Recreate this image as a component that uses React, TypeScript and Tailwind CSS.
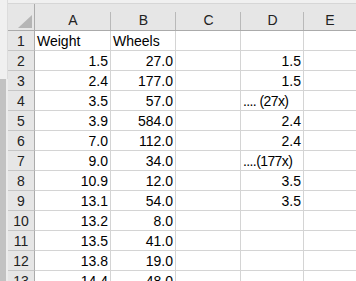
import React from "react";

const rows: { n: number; a: string; b: string; d: string; dLeft?: boolean }[] = [
  { n: 1, a: "Weight", b: "Wheels", d: "" },
  { n: 2, a: "1.5", b: "27.0", d: "1.5" },
  { n: 3, a: "2.4", b: "177.0", d: "1.5" },
  { n: 4, a: "3.5", b: "57.0", d: ".... (27x)", dLeft: true },
  { n: 5, a: "3.9", b: "584.0", d: "2.4" },
  { n: 6, a: "7.0", b: "112.0", d: "2.4" },
  { n: 7, a: "9.0", b: "34.0", d: "....(177x)", dLeft: true },
  { n: 8, a: "10.9", b: "12.0", d: "3.5" },
  { n: 9, a: "13.1", b: "54.0", d: "3.5" },
  { n: 10, a: "13.2", b: "8.0", d: "" },
  { n: 11, a: "13.5", b: "41.0", d: "" },
  { n: 12, a: "13.8", b: "19.0", d: "" },
  { n: 13, a: "14.4", b: "48.0", d: "" },
];

function HeaderCell({ label, w }: { label: string; w: string }) {
  return (
    <div className={`relative ${w} shrink-0 flex items-center justify-center text-[14px] text-[#222]`}>
      <span className="pt-[6px]">{label}</span>
      <span className="absolute right-0 top-[8px] bottom-0 w-px bg-[#b9b9b9]" />
    </div>
  );
}

export default function App() {
  return (
    <div
      className="w-[356px] h-[281px] overflow-hidden flex bg-white"
      style={{ fontFamily: '"Liberation Sans", Arial, sans-serif' }}
    >
      <div className="w-[8px] shrink-0 flex flex-col">
        <div className="h-[79px] bg-[#f0f0f0] border-r border-[#dcdcdc]" />
        <div className="flex-1 flex">
          <div className="w-[6px] bg-[#c2c2c2]" />
          <div className="flex-1 bg-[#ededed]" />
        </div>
      </div>
      <div className="flex-1 flex flex-col min-w-0">
        <div className="h-[4px] shrink-0 bg-[#f0f0f0] border-b border-[#d6d6d6]" />
        <div className="h-[27px] shrink-0 flex bg-[#e6e6e6] border-b border-[#ababab]">
          <div className="relative w-[27px] shrink-0 border-r border-[#ababab]">
            <svg className="absolute left-[10px] top-[11px]" width="14" height="13" viewBox="0 0 14 13">
              <polygon points="14,0 14,13 0,13" fill="#b5b5b5" />
            </svg>
          </div>
          <HeaderCell label="A" w="w-[76px]" />
          <HeaderCell label="B" w="w-[65px]" />
          <HeaderCell label="C" w="w-[65px]" />
          <HeaderCell label="D" w="w-[63px]" />
          <div className="flex-1 flex items-center justify-center text-[14px] text-[#222]">
            <span className="pt-[6px]">E</span>
          </div>
        </div>
        {rows.map((r) => (
          <div key={r.n} className="h-[20px] shrink-0 flex text-[14px] text-black">
            <div className="w-[27px] shrink-0 bg-[#e6e6e6] border-r border-b border-r-[#ababab] border-b-[#c6c6c6] flex items-center justify-center pt-[2px] text-[#222]">
              {r.n}
            </div>
            <div
              className={`w-[76px] shrink-0 border-r border-b border-[#d4d4d4] flex items-center pt-[2px] px-[2px] ${
                r.n === 1 ? "justify-start" : "justify-end"
              }`}
            >
              {r.a}
            </div>
            <div
              className={`w-[65px] shrink-0 border-r border-b border-[#d4d4d4] flex items-center pt-[2px] px-[2px] ${
                r.n === 1 ? "justify-start" : "justify-end"
              }`}
            >
              {r.b}
            </div>
            <div className="w-[65px] shrink-0 border-r border-b border-[#d4d4d4]" />
            <div
              className={`w-[63px] shrink-0 border-r border-b border-[#d4d4d4] flex items-center pt-[2px] px-[2px] whitespace-nowrap ${
                r.dLeft ? "justify-start tracking-[-0.6px]" : "justify-end"
              }`}
            >
              {r.d}
            </div>
            <div className="flex-1 border-b border-[#d4d4d4]" />
          </div>
        ))}
      </div>
    </div>
  );
}
